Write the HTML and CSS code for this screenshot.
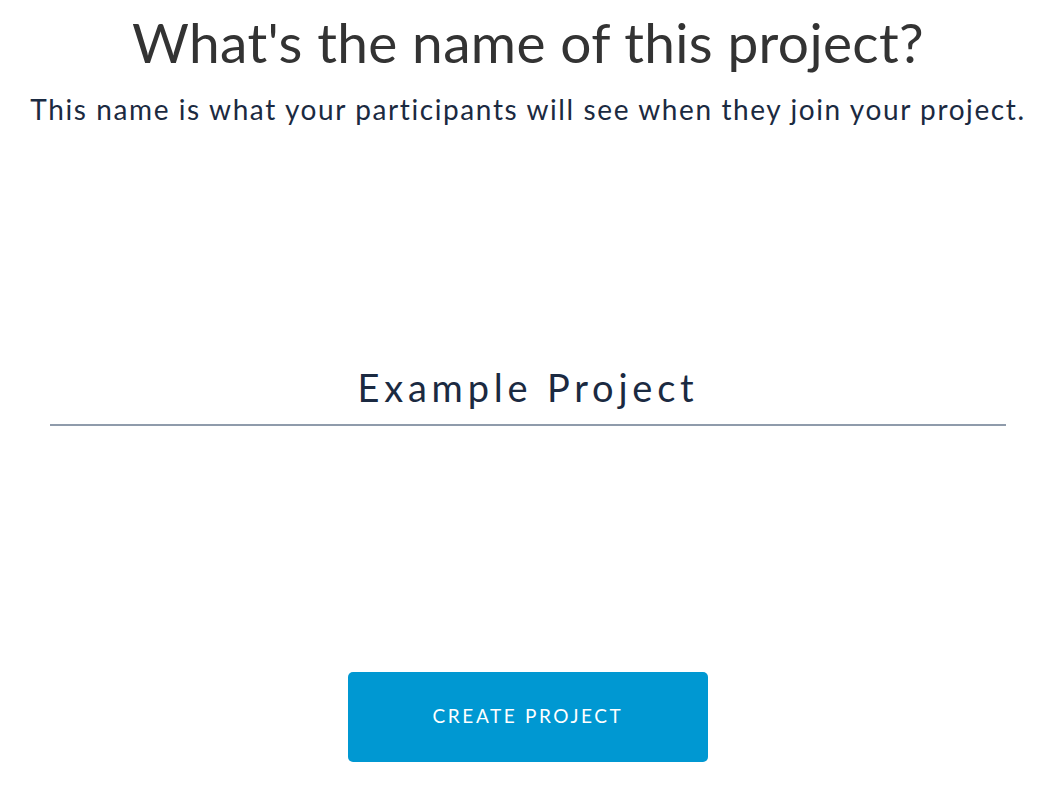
FILE: index.html
```html
<!DOCTYPE html>
<html>
<head>
<meta charset="utf-8">
<link rel="stylesheet" href="styles.css">
</head>
<body>
<main class="page">
  <header class="intro">
    <h1 class="title">What's the name of this project?</h1>
    <p class="subtitle">This name is what your participants will see when they join your project.</p>
  </header>
  <div class="field">
    <input class="name-input" type="text" value="Example Project">
  </div>
  <div class="actions">
    <button class="create-btn" type="button">CREATE PROJECT</button>
  </div>
</main>
</body>
</html>
```
FILE: styles.css
```css
html, body {
  margin: 0;
  padding: 0;
  background: #ffffff;
}
body {
  font-family: "Lato", "Noto Sans", sans-serif;
}
.page {
  width: 1044px;
  height: 790px;
  box-sizing: border-box;
  padding-left: 12px;
  display: flex;
  flex-direction: column;
  align-items: center;
}
.intro {
  text-align: center;
  padding-top: 9px;
}
.title {
  margin: 0;
  font-size: 55px;
  font-weight: 400;
  line-height: 66px;
  letter-spacing: 0.35px;
  color: #333333;
}
.subtitle {
  margin: 17px 0 0;
  font-size: 28px;
  line-height: 34px;
  letter-spacing: 1.6px;
  white-space: nowrap;
  color: #1b2a41;
}
.field {
  margin-top: 238px;
  width: 956px;
}
.name-input {
  display: block;
  width: 100%;
  box-sizing: content-box;
  border: none;
  border-bottom: 2px solid #8f9bab;
  outline: none;
  background: transparent;
  text-align: center;
  font-family: inherit;
  font-size: 38px;
  letter-spacing: 4.8px;
  color: #1b2a41;
  padding: 0 0 14px;
  height: 46px;
  line-height: 46px;
}
.actions {
  margin-top: 246px;
}
.create-btn {
  width: 360px;
  height: 90px;
  border: none;
  border-radius: 5px;
  background: #0098d2;
  color: #ffffff;
  font-family: inherit;
  font-size: 19px;
  letter-spacing: 2.6px;
  padding: 0 0 3px;
}
```
